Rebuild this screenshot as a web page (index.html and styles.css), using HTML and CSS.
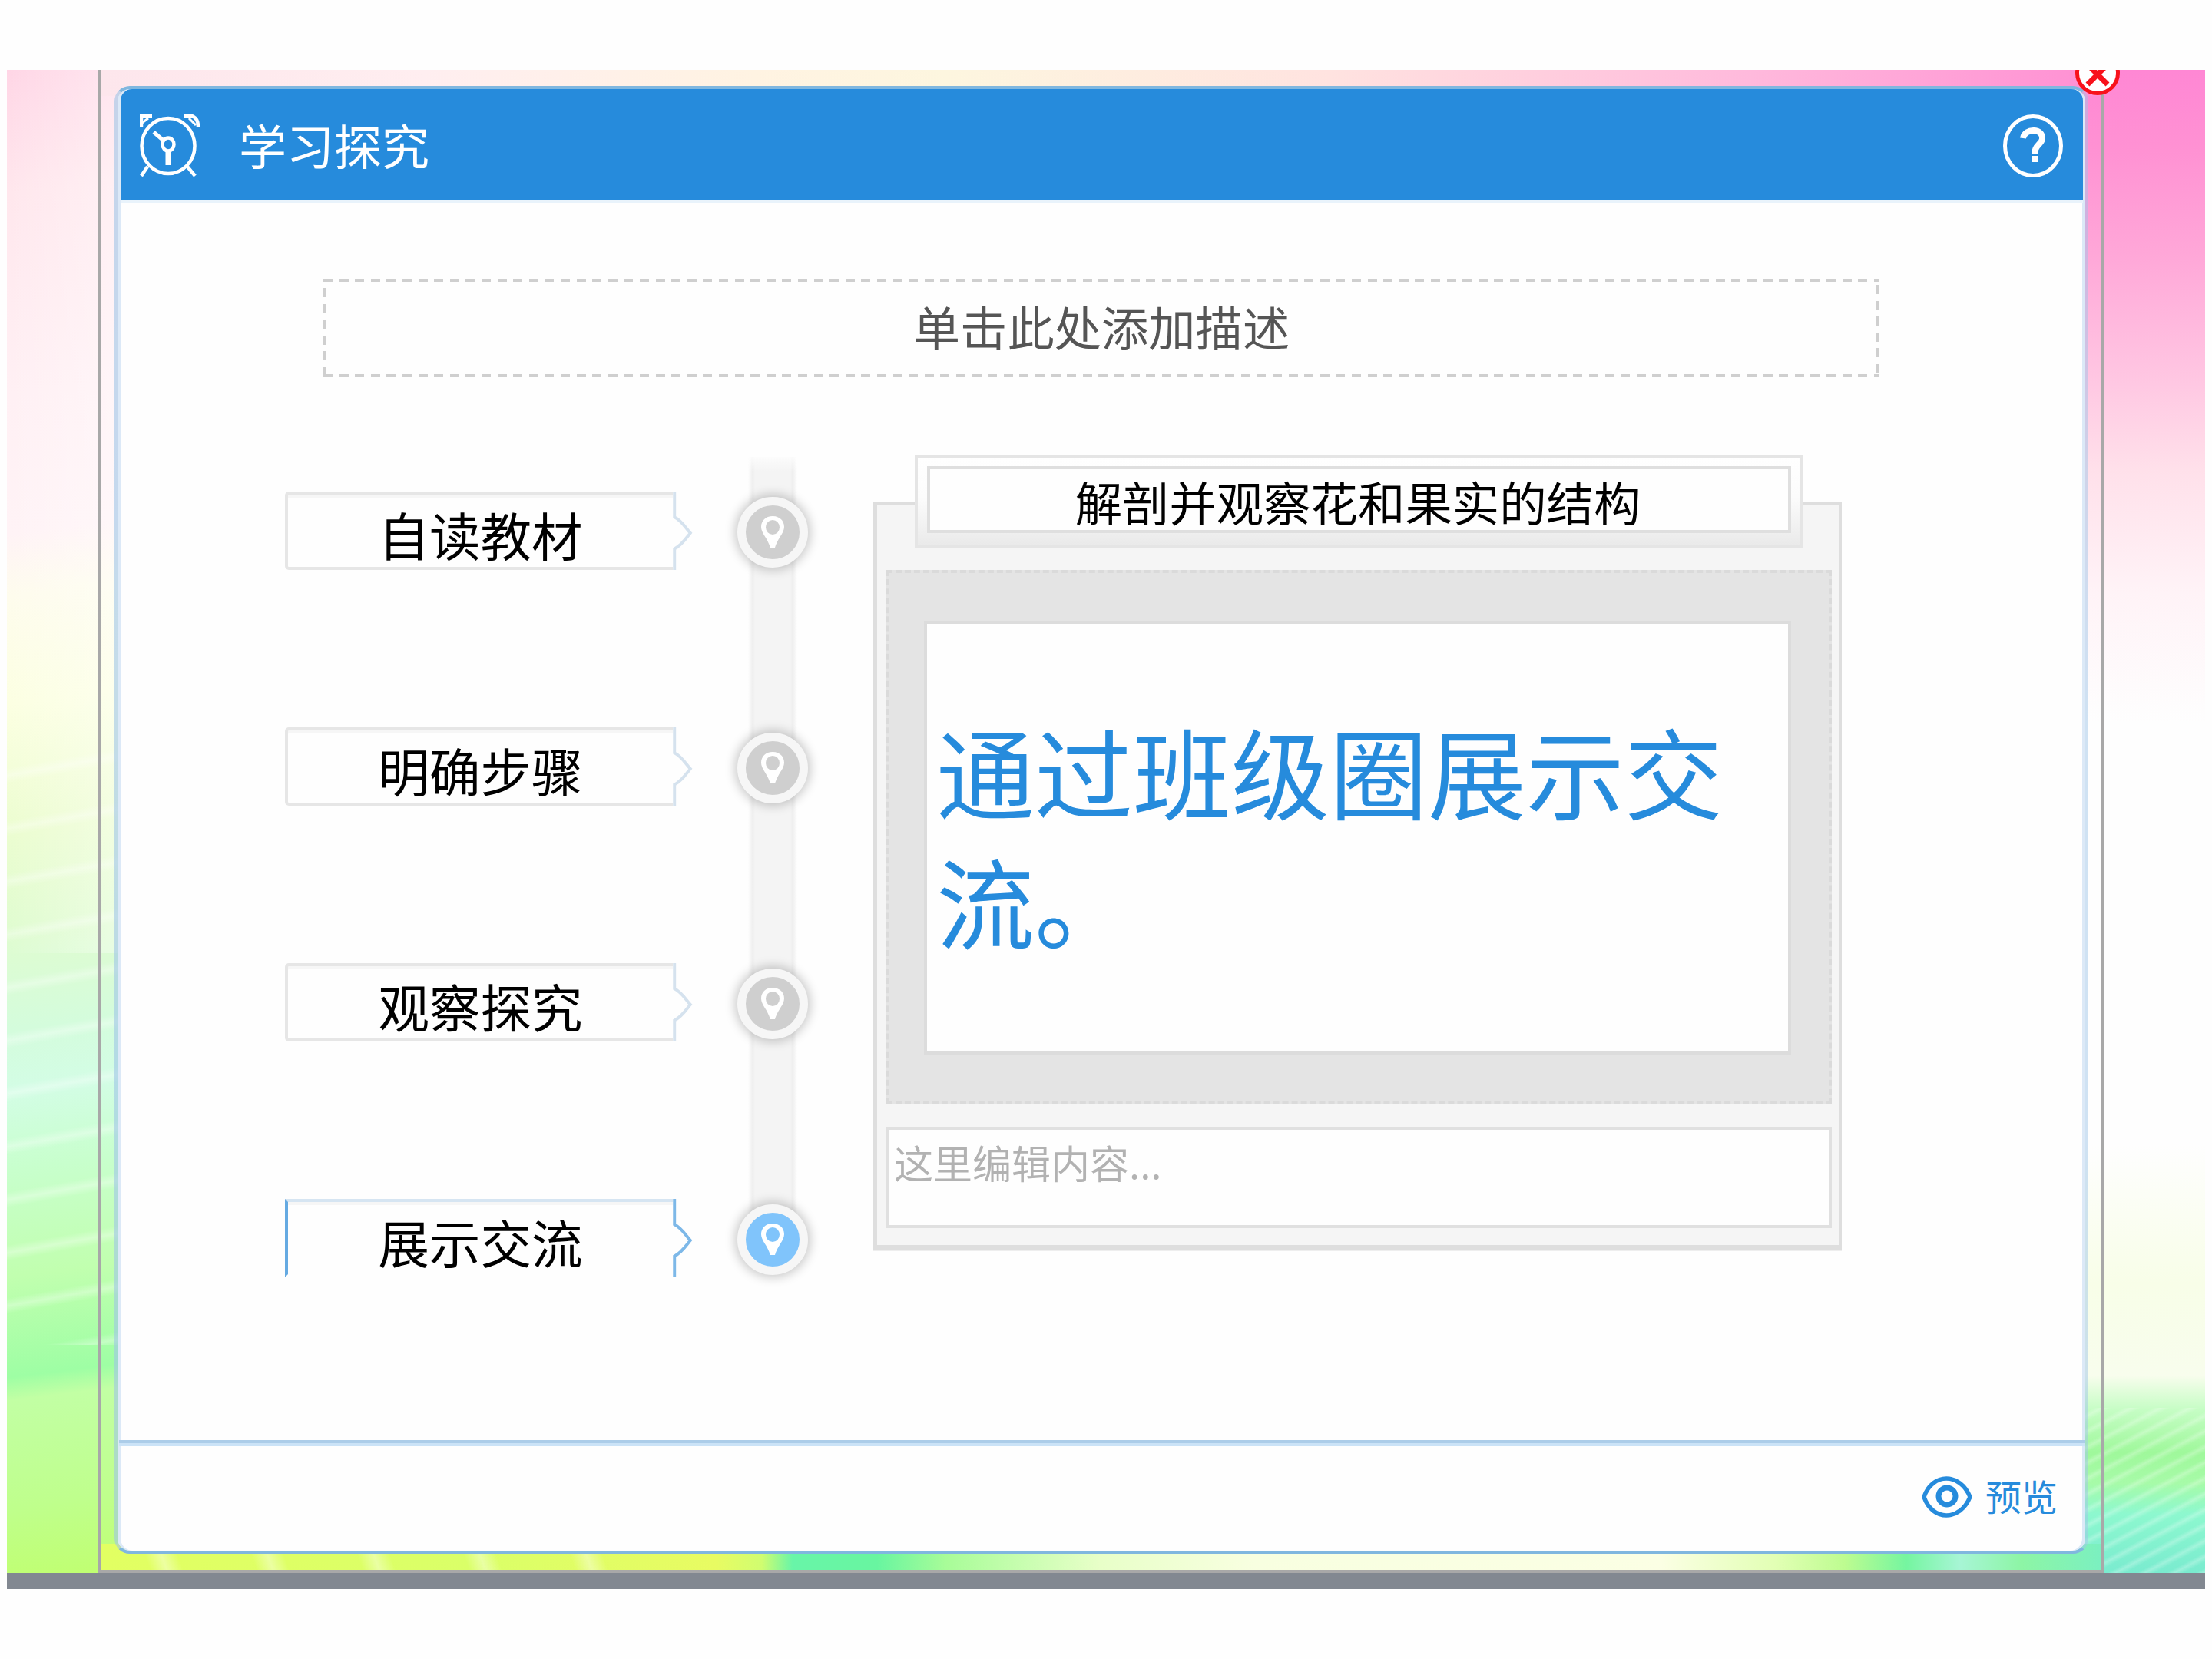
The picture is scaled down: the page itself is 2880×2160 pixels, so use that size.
FILE: index.html
```html
<!DOCTYPE html>
<html lang="zh-CN">
<head>
<meta charset="utf-8">
<title>学习探究</title>
<link rel="stylesheet" href="styles.css">
</head>
<body>
<svg class="defs" width="0" height="0" aria-hidden="true">
  <symbol id="pin" viewBox="0 0 30 42">
    <path fill="#fff" fill-rule="evenodd" d="M15 0C6 0 0 6 0 14c0 8 8 14 12 27h6c4-13 12-19 12-27C30 6 24 0 15 0zm0 5a9 9.500 0 1 1 0 19a9 9.500 0 0 1 0-19z"/>
  </symbol>
  <symbol id="flag" viewBox="0 0 26 104">
    <path fill="none" stroke="currentColor" stroke-width="4" d="M2 0V34C12 39 18 50 23 55C18 61 12 71 2 76V104"/>
  </symbol>
</svg>
<main class="stage">
  <div class="frame">
    <section class="panel">
      <header class="head">
        <svg class="clock" viewBox="0 0 78 82" fill="none" stroke="#fff" stroke-width="4.500">
          <ellipse cx="37" cy="41" rx="34.500" ry="36"/>
          <path d="M2 17V2H16M58 2H68Q76 5 76 16M10 68L2 80M62 68L72 80"/>
          <path d="M3 11L11 5M64 5L73 14" stroke-width="3"/>
          <ellipse cx="37" cy="39" rx="7.500" ry="8.500"/>
          <path d="M18 23L31 34" stroke-width="5"/>
          <path d="M37 48V66" stroke-width="7"/>
        </svg>
        <h1 class="title">学习探究</h1>
        <svg class="help" viewBox="0 0 78 82" fill="none" stroke="#fff" stroke-width="5">
          <ellipse cx="39" cy="41" rx="36.500" ry="38.500"/>
          <path stroke-width="8" d="M26 31C28 17 53 18 51 32C50 39 41 40 41 51M41 54V62"/>
        </svg>
      </header>
      <div class="body">
        <div class="desc">单击此处添加描述</div>
        <div class="work">
          <ul class="steps">
            <li class="step"><span class="label">自读教材</span><svg class="flag"><use href="#flag"/></svg><i class="dot"><svg class="pin"><use href="#pin"/></svg></i></li>
            <li class="step"><span class="label">明确步骤</span><svg class="flag"><use href="#flag"/></svg><i class="dot"><svg class="pin"><use href="#pin"/></svg></i></li>
            <li class="step"><span class="label">观察探究</span><svg class="flag"><use href="#flag"/></svg><i class="dot"><svg class="pin"><use href="#pin"/></svg></i></li>
            <li class="step active"><span class="label">展示交流</span><svg class="flag"><use href="#flag"/></svg><i class="dot"><svg class="pin"><use href="#pin"/></svg></i></li>
          </ul>
          <article class="card">
            <div class="card-title"><h2>解剖并观察花和果实的结构</h2></div>
            <div class="media"><p class="note">通过班级圈展示交流。</p></div>
            <div class="edit">这里编辑内容...</div>
          </article>
        </div>
      </div>
      <footer class="foot">
        <svg class="eye" viewBox="0 0 66 54" fill="none" stroke="#268bdc" stroke-width="5.500">
          <path d="M3 27C14-5 50-5 63 27C50 59 14 59 3 27z"/>
          <circle cx="33" cy="26" r="11" stroke-width="7"/>
        </svg>
        <span>预览</span>
      </footer>
    </section>
  </div>
  <svg class="close" viewBox="0 0 58 58">
    <circle cx="29" cy="29" r="26.500" fill="#fff" stroke="#f8121b" stroke-width="5"/>
    <path d="M16 18L42 44M42 18L16 44" stroke="#f8121b" stroke-width="7"/>
  </svg>
</main>
</body>
</html>
```
FILE: styles.css
```css
* { box-sizing: border-box; margin: 0; padding: 0; }

body {
  width: 2880px;
  height: 2160px;
  padding: 91px 9px;
  background: #fefefe;
  overflow: hidden;
  font-family: "Noto Sans CJK SC", sans-serif;
  font-weight: 400;
}

.defs { position: absolute; }

.stage {
  position: relative;
  height: 1978px;
  padding: 0 131px 0 119px;
  overflow: hidden;
  border-bottom: 21px solid #828891;
  background:
    linear-gradient(90deg, #fff0, #ffffff66) 0 0 / 160px 1150px no-repeat,
    repeating-linear-gradient(170deg, #fff0 0 48px, #ffffff55 58px, #fff0 68px) 0 860px / 160px 800px no-repeat,
    repeating-linear-gradient(152deg, #fff0 0 7px, #ffffff44 12px, #fff0 18px) 100% 100% / 160px 215px no-repeat,
    linear-gradient(173deg, #ffd6e6, #ffe7ed 160px, #fff0f4 420px, #fff3f6 600px, #fefced 680px, #fcffe2 820px, #ecfdd0 980px, #dffcd0 1120px, #d4fcdc 1240px, #d3fde5 1320px, #c8ffcd 1420px, #c1ffaf 1560px, #9efea4 1690px, #c2ffa4 1720px, #bfff8c 1860px, #c0ff70) 0 0 / 160px 100% no-repeat,
    linear-gradient(#ff87d4, #ff91d3 100px, #ffa7d8 240px, #ffc6e2 400px, #ffe0ea 520px, #fff3f7 680px, #fefefe 850px, #fefefe 1400px, #f8fee8 1580px, #f8fded 1700px, #c5fdc4 1745px, #9ff89b 1800px, #a7fba8 1840px, #8df8cf 1880px, #7aebcf) 100% 0 / 160px 100% no-repeat;
}

.frame {
  height: 1957px;
  padding: 21px 16px 21px 17px;
  border: solid #a8a8a8;
  border-width: 0 5px 4px 4px;
  background:
    linear-gradient(90deg, #fde6ec, #ffeef0 420px, #fff3e2 850px, #fdf6df 1100px, #ffe3e0 1600px, #ffb9dc 2150px, #ff8fd3) 0 0 / 100% 34px no-repeat,
    repeating-linear-gradient(70deg, #fff0 0 60px, #ffffff66 80px, #fff0 100px 130px) 0 100% / 740px 34px no-repeat,
    linear-gradient(90deg, #e2ff62, #daff68 480px, #e8fb62 800px, #d0fd70 860px, #68f5a8 900px, #68f5a0 1010px, #a8fc98 1100px, #e8ffc8 1300px, #f8ffe0 1500px, #fbffe4 2030px, #e2ffb4 2180px, #bdfc90 2270px, #75f5a0 2350px, #a7f5d5 2420px, #8df5a5 2500px, #7bf0c0) 0 100% / 100% 34px no-repeat;
}

.panel {
  height: 1911px;
  display: flex;
  flex-direction: column;
  border: 4px solid #80b7df;
  border-right-color: #9fc5e780;
  border-left-color: #9fc5e799;
  border-radius: 20px;
  background: #fefefe;
  background-clip: padding-box;
  box-shadow: inset 4px 0 #dce9f7, inset -4px 0 #dce9f7;
}

.head {
  height: 148px;
  margin: 0 3px 0 4px;
  padding: 0 26px 0 25px;
  flex: none;
  display: flex;
  align-items: center;
  background: #268bdc;
  border-bottom: 4px solid #e9f3fb;
  border-radius: 15px 15px 0 0;
}
.clock { width: 78px; height: 82px; margin-top: 3px; }
.title {
  flex: 1;
  margin: 0 0 0 51px;
  font-size: 62px;
  line-height: 80px;
  font-weight: 400;
  color: #fff;
}
.help { width: 78px; height: 82px; margin-top: 3px; }

.body { flex: 1; padding: 99px 268px 0 218px; }

.desc {
  width: 2026px;
  height: 128px;
  margin-left: 50px;
  text-align: center;
  font-size: 61.300px;
  line-height: 124px;
  color: #555;
  background:
    repeating-linear-gradient(90deg, #cfcfcf 0 12px, #fff0 12px 20.600px) 0 0 / 100% 4px no-repeat,
    repeating-linear-gradient(90deg, #cfcfcf 0 12px, #fff0 12px 20.600px) 0 100% / 100% 4px no-repeat,
    repeating-linear-gradient(#cfcfcf 0 12px, #fff0 12px 20.600px) 0 12px / 4px 100% no-repeat,
    repeating-linear-gradient(#cfcfcf 0 12px, #fff0 12px 20.600px) 100% 8px / 4px 100% no-repeat;
}

.work { display: flex; align-items: flex-start; margin-top: 99px; }

.steps {
  width: 766px;
  height: 1020px;
  flex: none;
  padding-top: 50px;
  list-style: none;
  background:
    linear-gradient(#fefefe, #fefefe00) 603px 0 / 64px 24px no-repeat,
    linear-gradient(90deg, #fff0, #eee 6px, #f4f4f4 9px 55px, #eee 58px, #fff0 64px) 603px 5px / 64px 1010px no-repeat;
}
.step { height: 307px; display: flex; align-items: flex-start; color: #d5e2ee; }
.label {
  width: 505px;
  height: 102px;
  border: 4px solid #e6e6e6;
  border-right: 0;
  border-radius: 5px 0 0 5px;
  box-shadow: inset 0 4px #f6f6f6;
  background: #fefefe;
  text-align: center;
  font-size: 66.500px;
  line-height: 102px;
  color: #000;
}
.flag { width: 26px; height: 102px; }
.dot {
  width: 92px;
  height: 92px;
  margin: 7px 0 0 58px;
  flex: none;
  display: grid;
  place-items: center;
  border: 11px solid #f6f6f6;
  border-radius: 50%;
  background: #cfcfcf;
  box-shadow: 0 0 14px 3px #00000038;
}
.pin { width: 30px; height: 42px; }
.active { color: #7db8e8; }
.active .label { border-color: #d6e5f2 #fff #fefefe #65aae2; border-radius: 0; }
.active .dot { background: #80c4fb; }

.card {
  width: 1261px;
  height: 973px;
  margin-top: 64px;
  padding: 0 9px 0 12px;
  border: solid #dedede;
  border-width: 4px 4px 6px 5px;
  background: #f5f5f5;
  box-shadow: 0 2px #eee;
}
.card-title {
  width: 1157px;
  height: 121px;
  margin: -66px 0 0 37px;
  padding: 11px 12px;
  border: 4px solid #e5e5e5;
  background: linear-gradient(#fff, #fcfcfc 45%, #eaeaea);
}
.card-title h2 {
  height: 87px;
  border: 4px solid #dfdfdf;
  background: #fefefe;
  text-align: center;
  text-indent: -3px;
  font-size: 61.400px;
  line-height: 83px;
  font-weight: 400;
  color: #000;
}
.media {
  height: 696px;
  margin-top: 29px;
  padding: 62px 49px 61px 45px;
  border: 4px dashed #dadada;
  background: #e4e4e4;
}
.note {
  height: 565px;
  padding: 106px 12px 0 12px;
  border: 4px solid #dcdcdc;
  background: #fefefe;
  font-size: 128px;
  line-height: 169px;
  color: #268bdc;
}
.edit {
  height: 132px;
  margin-top: 29px;
  padding: 0 6px;
  border: 4px solid #e0e0e0;
  background: #fefefe;
  font-size: 51px;
  line-height: 84px;
  color: #b2b2b2;
}

.foot {
  height: 144px;
  margin-left: 2px;
  flex: none;
  display: flex;
  align-items: center;
  justify-content: flex-end;
  gap: 17px;
  padding: 0 36px 4px 0;
  border-top: 4px solid #accde9;
  box-shadow: inset 0 4px #cbe3f7;
  font-size: 47px;
  line-height: 60px;
  color: #268bdc;
}
.eye { width: 66px; height: 54px; margin-top: 4px; }

.close {
  position: absolute;
  left: 2693px;
  top: -25px;
  width: 58px;
  height: 58px;
}
```
